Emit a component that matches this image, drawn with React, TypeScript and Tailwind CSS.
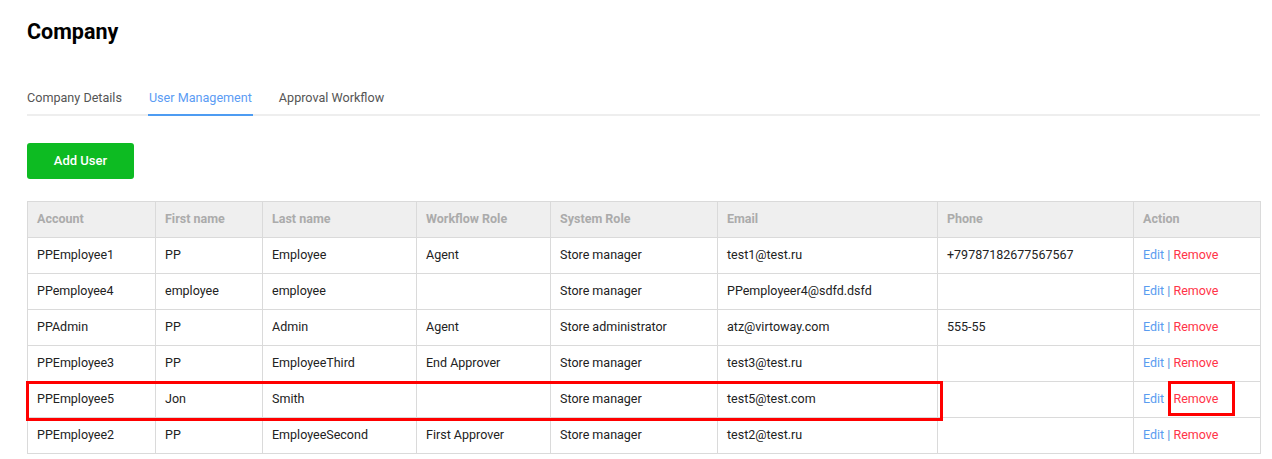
import React from 'react';

const columns = [
  { label: 'Account', w: 'w-[128px]' },
  { label: 'First name', w: 'w-[107px]' },
  { label: 'Last name', w: 'w-[154px]' },
  { label: 'Workflow Role', w: 'w-[134px]' },
  { label: 'System Role', w: 'w-[167px]' },
  { label: 'Email', w: 'w-[220px]' },
  { label: 'Phone', w: 'w-[196px]' },
  { label: 'Action', w: 'w-[127px]' },
];

const users = [
  ['PPEmployee1', 'PP', 'Employee', 'Agent', 'Store manager', 'test1@test.ru', '+79787182677567567'],
  ['PPemployee4', 'employee', 'employee', '', 'Store manager', 'PPemployeer4@sdfd.dsfd', ''],
  ['PPAdmin', 'PP', 'Admin', 'Agent', 'Store administrator', 'atz@virtoway.com', '555-55'],
  ['PPEmployee3', 'PP', 'EmployeeThird', 'End Approver', 'Store manager', 'test3@test.ru', ''],
  ['PPEmployee5', 'Jon', 'Smith', '', 'Store manager', 'test5@test.com', ''],
  ['PPEmployee2', 'PP', 'EmployeeSecond', 'First Approver', 'Store manager', 'test2@test.ru', ''],
];

export default function App() {
  return (
    <div className="min-h-screen bg-white pl-[27px] pt-[20px] font-['Roboto',sans-serif]">
      <div className="w-[1233px]">
        {/* Title */}
        <h1 className="text-[21.5px] leading-[24px] font-bold text-black">Company</h1>

        {/* Tabs */}
        <div className="mt-[46px] flex gap-[26px] border-b-2 border-[#eeeeee] text-[12.6px] leading-[16px]">
          <div className="pb-2 text-[#555]">Company Details</div>
          <div className="-mb-[2px] border-b-2 border-[#4d9cf2] px-px pb-2 text-[#5b9cf4]">User Management</div>
          <div className="pb-2 text-[#555]">Approval Workflow</div>
        </div>

        <button className="mt-[27px] h-9 w-[107px] rounded-[3px] bg-[#0dbb22] text-[13px] font-medium text-white">
          Add User
        </button>

        {/* Users table */}
        <div className="relative mt-[22px]">
          <table className="w-[1233px] table-fixed border-collapse text-[12.5px]">
            <thead>
              <tr className="bg-[#efefef]">
                {columns.map((c) => (
                  <th
                    key={c.label}
                    className={`${c.w} h-9 border border-[#dadada] px-[9px] text-left font-bold text-[#ababab]`}
                  >
                    {c.label}
                  </th>
                ))}
              </tr>
            </thead>
            <tbody>
              {users.map((u) => (
                <tr key={u[0]}>
                  {u.map((v, i) => (
                    <td key={i} className="h-9 border border-[#dadada] px-[9px] text-[#222]">
                      {v}
                    </td>
                  ))}
                  <td className="h-9 border border-[#dadada] px-[9px]">
                    <span className="text-[#5a9cf0]">Edit</span>
                    <span className="text-[#4a8fdc]"> | </span>
                    <span className="text-[#ff3448]">Remove</span>
                  </td>
                </tr>
              ))}
            </tbody>
          </table>

          {/* highlight marks */}
          <div className="absolute left-[-1px] top-[180px] h-[40px] w-[917px] border-[3px] border-[#ff0000]" />
          <div className="absolute left-[1141px] top-[180px] h-[35px] w-[67px] border-[3px] border-[#ff0000]" />
        </div>
      </div>
    </div>
  );
}
